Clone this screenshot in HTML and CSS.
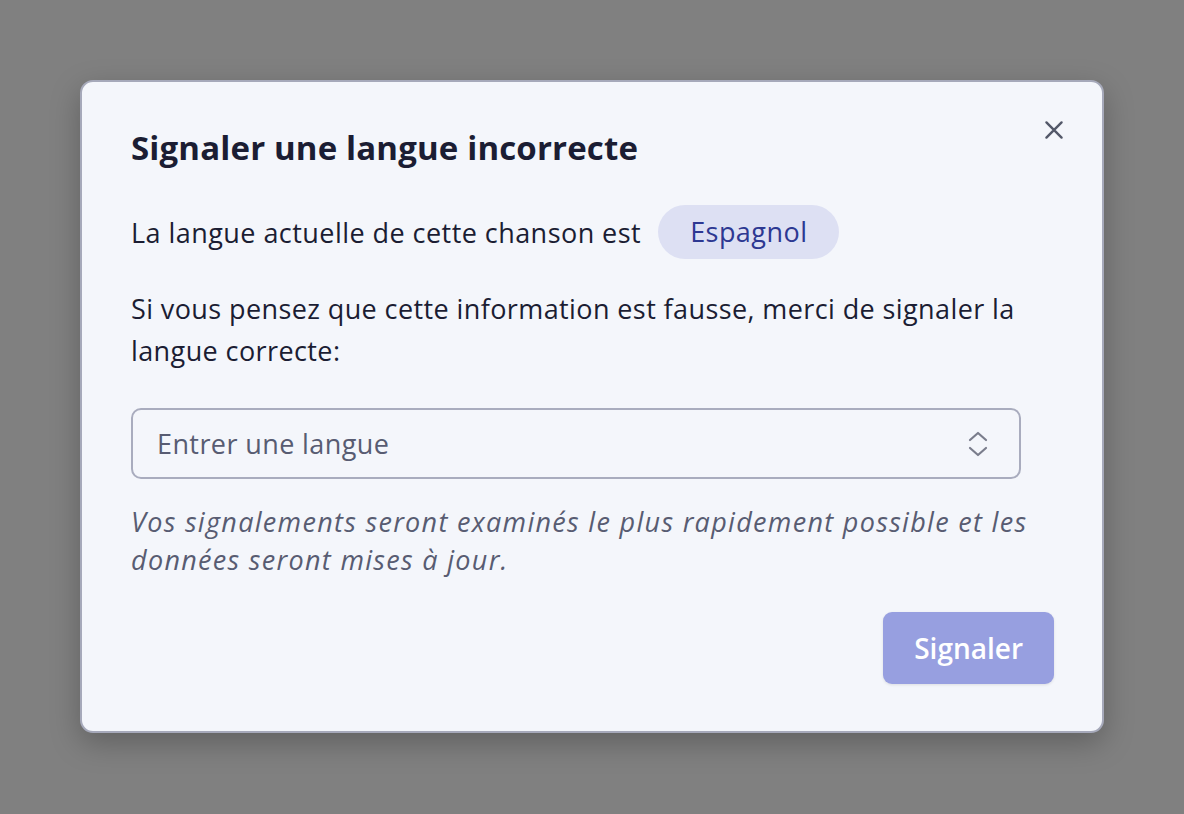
FILE: index.html
```html
<!DOCTYPE html>
<html lang="fr">
<head>
    <meta charset="UTF-8">
    <title>Signaler une langue incorrecte</title>
    <link rel="stylesheet" href="styles.css">
</head>
<body>
<div class="overlay">
    <div class="modal">
        <button class="close" aria-label="Fermer">
            <svg viewBox="0 0 24 24" width="26" height="26">
                <path d="M5 5L19 19M19 5L5 19" stroke="#535869" stroke-width="2.2" stroke-linecap="round" fill="none"></path>
            </svg>
        </button>
        <h2 class="title">Signaler une langue incorrecte</h2>
        <div class="current">
            <span>La langue actuelle de cette chanson est</span>
            <span class="pill">Espagnol</span>
        </div>
        <p class="text">Si vous pensez que cette information est fausse, merci de signaler la langue correcte:</p>
        <div class="select">
            <span class="placeholder">Entrer une langue</span>
            <svg viewBox="0 0 22 28" width="22" height="28">
                <path d="M3 10L11 3L19 10M3 18L11 25L19 18" stroke="#7a7d8c" stroke-width="2.2" stroke-linecap="round" stroke-linejoin="round" fill="none"></path>
            </svg>
        </div>
        <p class="note">Vos signalements seront examinés le plus rapidement possible et les données seront mises à jour.</p>
        <div class="actions">
            <button class="submit">Signaler</button>
        </div>
    </div>
</div>
</body>
</html>
```
FILE: styles.css
```css
body {
    margin: 0;
    font-family: "Open Sans", "Noto Sans", sans-serif;
    background-color: #808080;
}

.overlay {
    display: flex;
    align-items: flex-start;
    justify-content: center;
    height: 814px;
    padding-top: 80px;
    box-sizing: border-box;
}

.modal {
    position: relative;
    width: 1024px;
    box-sizing: border-box;
    padding: 46px 48px 47px 49px;
    border: 2px solid #a6a9ba;
    border-radius: 13px;
    background-color: #f4f6fb;
    box-shadow: 0 10px 30px rgba(0, 0, 0, 0.25);
    color: #1b1d33;
}

.close {
    position: absolute;
    top: 35px;
    right: 35px;
    padding: 0;
    border: none;
    background: none;
    cursor: pointer;
}

.title {
    margin: 0;
    font-size: 33px;
    font-weight: 700;
    line-height: 40px;
    letter-spacing: 0.15px;
}

.current {
    display: flex;
    align-items: center;
    gap: 17px;
    margin-top: 37px;
    font-size: 27px;
    letter-spacing: 0.45px;
}

.pill {
    display: inline-block;
    padding: 0 32px;
    line-height: 54px;
    border-radius: 27px;
    background-color: #dde0f3;
    color: #2d3892;
}

.text {
    width: 890px;
    margin: 29px 0 0;
    font-size: 27px;
    line-height: 42px;
    letter-spacing: 0.4px;
}

.select {
    display: flex;
    align-items: center;
    justify-content: space-between;
    width: 890px;
    height: 71px;
    margin-top: 36px;
    padding: 0 30px 0 24px;
    box-sizing: border-box;
    border: 2px solid #a9acbe;
    border-radius: 10px;
    color: #585c72;
    font-size: 27px;
    letter-spacing: 0.4px;
}

.note {
    width: 900px;
    margin: 24px 0 0;
    color: #585c72;
    font-size: 27px;
    font-style: italic;
    line-height: 38px;
    letter-spacing: 1.3px;
}

.actions {
    display: flex;
    justify-content: flex-end;
    margin-top: 33px;
}

.submit {
    height: 72px;
    padding: 0 31px;
    border: none;
    border-radius: 9px;
    background-color: #979fe0;
    color: #ffffff;
    font-family: inherit;
    font-size: 28px;
    font-weight: 600;
    box-shadow: 0 1px 3px rgba(0, 0, 0, 0.1);
}
```
